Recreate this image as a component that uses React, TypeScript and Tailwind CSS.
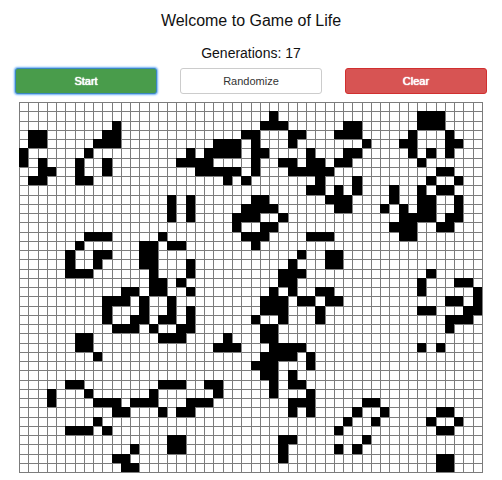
import { useState } from "react";

const COLS = 50;
const ROWS = 40;

// Columns that are alive in each row, from the top row down.
const PATTERN: number[][] = [
  [],
  [27, 43, 44, 45],
  [10, 26, 27, 28, 35, 36, 43, 44, 45],
  [1, 2, 9, 10, 24, 25, 29, 30, 34, 35, 36, 42, 46],
  [1, 2, 8, 9, 10, 21, 22, 23, 25, 29, 37, 41, 42, 46, 47],
  [0, 7, 18, 20, 21, 22, 23, 25, 26, 31, 35, 36, 42, 44, 46],
  [0, 2, 6, 9, 17, 18, 19, 20, 25, 28, 29, 31, 32, 34, 35, 43],
  [2, 3, 6, 9, 19, 20, 21, 22, 23, 25, 29, 30, 31, 32, 33, 45, 46],
  [1, 2, 6, 7, 22, 24, 32, 36, 44, 47],
  [31, 32, 34, 36, 40, 43, 45, 46],
  [16, 18, 25, 26, 33, 34, 35, 40, 43, 44, 47],
  [16, 18, 24, 25, 26, 27, 34, 35, 39, 41, 43, 44, 47],
  [16, 18, 23, 24, 25, 28, 41, 42, 43, 44, 46, 47],
  [23, 26, 27, 40, 41, 42, 45, 46],
  [7, 8, 9, 15, 24, 25, 26, 31, 32, 33, 41, 42],
  [6, 13, 14, 16, 17, 25],
  [5, 8, 9, 13, 14, 30, 33, 34],
  [5, 8, 13, 14, 18, 29, 33, 34],
  [5, 6, 7, 14, 18, 28, 29, 30, 44],
  [14, 15, 17, 28, 29, 43, 47, 48],
  [11, 12, 14, 15, 18, 27, 29, 32, 33, 43, 49],
  [10, 9, 11, 13, 16, 26, 27, 28, 30, 31, 33, 34, 46, 47, 49],
  [9, 13, 16, 18, 26, 27, 28, 32, 43, 44, 48, 49],
  [9, 12, 13, 15, 16, 18, 25, 28, 32, 46, 47, 48],
  [10, 11, 12, 14, 17, 18, 26, 27, 46],
  [6, 7, 15, 16, 17, 22, 26, 27],
  [6, 7, 21, 22, 23, 27, 28, 29, 30, 43, 45],
  [8, 26, 27, 28, 29, 31],
  [25, 26, 27, 31],
  [26, 27, 29],
  [5, 6, 15, 16, 17, 20, 21, 27, 29, 30],
  [3, 7, 14, 21, 27, 31],
  [3, 8, 9, 10, 12, 13, 14, 18, 19, 20, 29, 30, 31, 37, 38],
  [10, 11, 15, 17, 18, 29, 31, 36, 39, 45, 46],
  [8, 35, 38, 44, 47],
  [5, 6, 7, 9, 34, 45, 46],
  [16, 17, 28, 29, 37],
  [12, 16, 17, 28, 34, 36],
  [10, 11, 28, 45, 46],
  [11, 12, 45, 46],
];

const toBoard = (rows: number[][]): boolean[] =>
  rows.flatMap((alive) =>
    Array.from({ length: COLS }, (_, col) => alive.includes(col)),
  );

function Board({ cells }: { cells: boolean[] }) {
  return (
    <div
      role="img"
      aria-label="Game board"
      className="mx-[19px] grid aspect-[5/4] grid-cols-[repeat(50,minmax(0,1fr))] grid-rows-[repeat(40,minmax(0,1fr))] border-r border-b border-[#7c7c7c]"
    >
      {cells.map((alive, i) => (
        <div
          key={i}
          className={
            alive
              ? "border-t border-l border-black bg-black"
              : "border-t border-l border-[#7c7c7c] bg-white"
          }
        />
      ))}
    </div>
  );
}

export default function App() {
  const [cells, setCells] = useState<boolean[]>(() => toBoard(PATTERN));
  const [generation, setGeneration] = useState(17);

  const randomize = () => {
    setCells(Array.from({ length: COLS * ROWS }, () => Math.random() < 0.3));
    setGeneration(0);
  };

  const clear = () => {
    setCells(Array.from({ length: COLS * ROWS }, () => false));
    setGeneration(0);
  };

  return (
    <main className="bg-white pt-[9px] pb-[7px] font-['Liberation_Sans',Arial,sans-serif] text-[#111]">
      <h1 className="text-center text-base leading-6">
        Welcome to Game of Life
      </h1>
      <p className="mt-2.5 text-center text-sm leading-5">
        Generations: {generation}
      </p>
      <div className="mt-[5px] mb-2 grid grid-cols-3 gap-[23px] px-[15px] text-[11px] leading-4">
        <button
          type="button"
          className="h-[26px] rounded-[3px] border border-[#3c86c0] bg-[#499c4b] text-white shadow-[0_0_2px_1px_#6aaef5] [text-shadow:0_0_1px_#fff,0_0_1px_#fff]"
        >
          Start
        </button>
        <button
          type="button"
          onClick={randomize}
          className="h-[26px] rounded-[3px] border border-[#ccc] bg-white text-[#333]"
        >
          Randomize
        </button>
        <button
          type="button"
          onClick={clear}
          className="h-[26px] rounded-[3px] border border-[#d12f2f] bg-[#d75453] text-white [text-shadow:0_0_1px_#fff,0_0_1px_#fff]"
        >
          Clear
        </button>
      </div>
      <Board cells={cells} />
    </main>
  );
}
